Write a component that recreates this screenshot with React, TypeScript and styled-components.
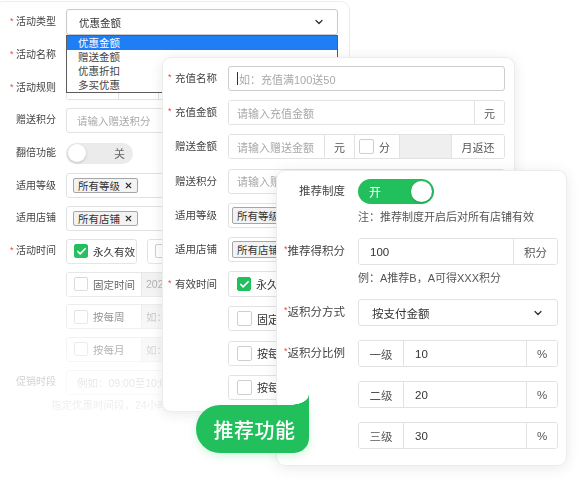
import React from "react";
import styled, { createGlobalStyle, css } from "styled-components";
import { ChevronDown, Check as CheckIcon, X } from "lucide-react";

const GREEN = "#22c05d";
const FONT = `"Liberation Sans", "Noto Sans CJK SC", sans-serif`;

const GlobalStyle = createGlobalStyle`
  html, body { margin: 0; padding: 0; background: #fff; }
  body { font-family: ${FONT}; }
  * { box-sizing: border-box; }
`;

const Canvas = styled.div`
  position: relative;
  width: 582px;
  height: 479px;
  overflow: hidden;
  background: #fff;
  font-family: ${FONT};
  color: #333;
`;

const Panel = styled.section<{
  $left: number;
  $top: number;
  $width: number;
  $height: number;
  $fs: number;
  $fade?: boolean;
}>`
  position: absolute;
  left: ${(p) => p.$left}px;
  top: ${(p) => p.$top}px;
  width: ${(p) => p.$width}px;
  height: ${(p) => p.$height}px;
  font-size: ${(p) => p.$fs}px;
  background: #fff;
  border: 1px solid #ececec;
  border-radius: 9px;
  box-shadow: 0 2px 14px rgba(0, 0, 0, 0.09);
  ${(p) =>
    p.$fade &&
    css`
      -webkit-mask-image: linear-gradient(
        to bottom,
        #000 0px,
        #000 250px,
        rgba(0, 0, 0, 0.5) 320px,
        rgba(0, 0, 0, 0.2) 390px,
        rgba(0, 0, 0, 0.05) 425px,
        transparent 450px
      );
      mask-image: linear-gradient(
        to bottom,
        #000 0px,
        #000 250px,
        rgba(0, 0, 0, 0.5) 320px,
        rgba(0, 0, 0, 0.2) 390px,
        rgba(0, 0, 0, 0.05) 425px,
        transparent 450px
      );
    `}
`;

const Form = styled.div<{ $gap: number; $pad: string }>`
  display: flex;
  flex-direction: column;
  gap: ${(p) => p.$gap}px;
  padding: ${(p) => p.$pad};
`;

const Row = styled.div<{ $cols: string; $h?: number; $colGap?: number; $rowGap?: number }>`
  display: grid;
  grid-template-columns: ${(p) => p.$cols};
  column-gap: ${(p) => p.$colGap ?? 0}px;
  row-gap: ${(p) => p.$rowGap ?? 0}px;
  align-items: center;
  min-height: ${(p) => p.$h ?? 25}px;
`;

const Label = styled.div<{ $right?: boolean; $fs: number }>`
  display: flex;
  align-items: flex-start;
  justify-content: ${(p) => (p.$right ? "flex-end" : "flex-start")};
  font-size: ${(p) => p.$fs}px;
  line-height: 1.25;
  color: #444;
  white-space: nowrap;
`;

const Star = styled.span<{ $w?: number }>`
  flex: none;
  width: ${(p) => (p.$w ? `${p.$w}px` : "auto")};
  color: #ef4338;
  font-size: 9px;
  line-height: 1;
  margin-top: 1px;
`;

const Box = styled.div<{
  $h?: number;
  $pad?: number;
  $border?: string;
  $between?: boolean;
  $w?: number;
}>`
  height: ${(p) => p.$h ?? 25}px;
  ${(p) => p.$w && `width: ${p.$w}px; flex: none;`}
  display: flex;
  align-items: center;
  justify-content: ${(p) => (p.$between ? "space-between" : "flex-start")};
  gap: 5px;
  padding: 0 ${(p) => p.$pad ?? 9}px;
  border: 1px solid ${(p) => p.$border ?? "#e2e2e2"};
  border-radius: 3px;
  background: #fff;
  min-width: 0;
  overflow: hidden;
  white-space: nowrap;
`;

const Group = styled.div<{ $h?: number }>`
  height: ${(p) => p.$h ?? 25}px;
  display: flex;
  align-items: stretch;
  border: 1px solid #e2e2e2;
  border-radius: 3px;
  background: #fff;
  overflow: hidden;
  min-width: 0;
  white-space: nowrap;
`;

const Cell = styled.div<{ $w?: number; $gray?: boolean; $center?: boolean; $pad?: number }>`
  flex: ${(p) => (p.$w ? `0 0 ${p.$w}px` : "1 1 0")};
  display: flex;
  align-items: center;
  justify-content: ${(p) => (p.$center ? "center" : "flex-start")};
  gap: 5px;
  padding: 0 ${(p) => (p.$center ? 0 : p.$pad ?? 9)}px;
  background: ${(p) => (p.$gray ? "#efefef" : "#fff")};
  color: #555;
  min-width: 0;
  overflow: hidden;
  & + & {
    border-left: 1px solid #e2e2e2;
  }
`;

const Placeholder = styled.span`
  color: #a9a9a9;
`;

const Value = styled.span<{ $muted?: boolean }>`
  color: ${(p) => (p.$muted ? "#999" : "#333")};
`;

const Caret = styled.span`
  display: inline-block;
  width: 1px;
  height: 13px;
  background: #333;
  margin-right: -4px;
`;

const SelectWrap = styled.div`
  position: relative;
`;

const Dropdown = styled.ul`
  position: absolute;
  left: 0;
  right: 0;
  top: 100%;
  margin: 0;
  padding: 0;
  list-style: none;
  border: 1px solid #5c5c5c;
  background: #fff;
  z-index: 2;
`;

const DropItem = styled.li<{ $active?: boolean }>`
  height: 14px;
  line-height: 14px;
  padding-left: 11px;
  font-size: 10.5px;
  color: ${(p) => (p.$active ? "#fff" : "#444")};
  background: ${(p) => (p.$active ? "#1f7ef6" : "transparent")};
`;

const Toggle = styled.div<{ $on?: boolean; $w: number; $h: number }>`
  justify-self: start;
  width: ${(p) => p.$w}px;
  height: ${(p) => p.$h}px;
  border-radius: ${(p) => p.$h / 2}px;
  background: ${(p) => (p.$on ? GREEN : "#ebebeb")};
  display: flex;
  flex-direction: ${(p) => (p.$on ? "row" : "row-reverse")};
  align-items: center;
  justify-content: space-between;
  padding: 0 2px;
`;

const ToggleText = styled.span<{ $on?: boolean }>`
  color: ${(p) => (p.$on ? "#fff" : "#666")};
  font-size: ${(p) => (p.$on ? 12 : 11)}px;
  padding-left: ${(p) => (p.$on ? 9 : 0)}px;
  padding-right: ${(p) => (p.$on ? 0 : 6)}px;
`;

const Knob = styled.span<{ $size: number }>`
  width: ${(p) => p.$size}px;
  height: ${(p) => p.$size}px;
  border-radius: 50%;
  background: #fff;
  box-shadow: 0 1px 3px rgba(0, 0, 0, 0.18);
  flex: none;
`;

const Tag = styled.span<{ $h: number }>`
  display: inline-flex;
  align-items: center;
  gap: 4px;
  height: ${(p) => p.$h}px;
  padding: 0 4px;
  border: 1px solid #a6a6a6;
  border-radius: 2px;
  background: #f3f3f3;
  color: #333;
  font-size: 10.5px;
`;

const Check = styled.span<{ $on?: boolean; $s: number }>`
  flex: none;
  width: ${(p) => p.$s}px;
  height: ${(p) => p.$s}px;
  border-radius: 2px;
  border: 1px solid ${(p) => (p.$on ? GREEN : "#cfcfcf")};
  background: ${(p) => (p.$on ? GREEN : "#fff")};
  display: inline-flex;
  align-items: center;
  justify-content: center;
`;

const Options = styled.div`
  display: flex;
  gap: 10px;
  min-width: 0;
`;

const Hint = styled.div`
  grid-column: 2;
  font-size: 11px;
  line-height: 14px;
  color: #555;
  white-space: nowrap;
`;

const FaintNote = styled.div`
  padding-left: 56px;
  margin-top: 2px;
  font-size: 10.5px;
  color: #888;
  white-space: nowrap;
`;

const Badge = styled.div`
  position: absolute;
  left: 196px;
  top: 405px;
  width: 113px;
  height: 48px;
  background: ${GREEN};
  border-radius: 24px 0 15px 24px;
  color: #fff;
  font-size: 20px;
  font-weight: 500;
  letter-spacing: 0.5px;
  display: flex;
  align-items: center;
  justify-content: center;
  padding-left: 4px;
  box-shadow: 0 3px 8px rgba(34, 192, 93, 0.18);
  &::after {
    content: "";
    position: absolute;
    right: 0;
    top: -10px;
    width: 19px;
    height: 10px;
    background: radial-gradient(ellipse 19px 10px at 0 0, transparent 96%, ${GREEN} 100%);
  }
`;

const Chevron = () => <ChevronDown size={12} strokeWidth={2.6} color="#333" />;

const Tick = ({ s }: { s: number }) => (
  <Check $on $s={s}>
    <CheckIcon size={s - 3} strokeWidth={3.6} color="#fff" />
  </Check>
);

const TagX = ({ children, h }: { children: React.ReactNode; h: number }) => (
  <Tag $h={h}>
    {children}
    <X size={9} strokeWidth={3} color="#333" />
  </Tag>
);

const A_COLS = "56px 1fr";
const B_COLS = "60px 1fr";
const C_COLS = "59px 1fr";

export default function App() {
  return (
    <>
      <GlobalStyle />
      <Canvas>
        {/* back panel: 活动 */}
        <Panel $left={-6} $top={1} $width={356} $height={470} $fs={10.5} $fade>
          <Form $gap={7.7} $pad="7px 11px 0 15px">
            <Row $cols={A_COLS} $h={26}>
              <Label $fs={10}>
                <Star $w={6}>*</Star>活动类型
              </Label>
              <SelectWrap>
                <Box $h={26} $pad={12} $border="#c9c9c9" $between>
                  <Value>优惠金额</Value>
                  <Chevron />
                </Box>
                <Dropdown>
                  <DropItem $active>优惠金额</DropItem>
                  <DropItem>赠送金额</DropItem>
                  <DropItem>优惠折扣</DropItem>
                  <DropItem>多买优惠</DropItem>
                </Dropdown>
              </SelectWrap>
            </Row>
            <Row $cols={A_COLS}>
              <Label $fs={10}>
                <Star $w={6}>*</Star>活动名称
              </Label>
              <Box />
            </Row>
            <Row $cols={A_COLS}>
              <Label $fs={10}>
                <Star $w={6}>*</Star>活动规则
              </Label>
              <Group>
                <Cell $w={51} />
                <Cell $w={40} />
                <Cell />
              </Group>
            </Row>
            <Row $cols={A_COLS}>
              <Label $fs={10}>
                <Star $w={6} />赠送积分
              </Label>
              <Box $pad={10}>
                <Placeholder>请输入赠送积分</Placeholder>
              </Box>
            </Row>
            <Row $cols={A_COLS}>
              <Label $fs={10}>
                <Star $w={6} />翻倍功能
              </Label>
              <Toggle $w={67} $h={21}>
                <ToggleText>关</ToggleText>
                <Knob $size={18} />
              </Toggle>
            </Row>
            <Row $cols={A_COLS}>
              <Label $fs={10}>
                <Star $w={6} />适用等级
              </Label>
              <Box $pad={6}>
                <TagX h={15}>所有等级</TagX>
              </Box>
            </Row>
            <Row $cols={A_COLS}>
              <Label $fs={10}>
                <Star $w={6} />适用店铺
              </Label>
              <Box $pad={6}>
                <TagX h={15}>所有店铺</TagX>
              </Box>
            </Row>
            <Row $cols={A_COLS}>
              <Label $fs={10}>
                <Star $w={6}>*</Star>活动时间
              </Label>
              <Options>
                <Box $w={71} $pad={7}>
                  <Tick s={14} />
                  <Value>永久有效</Value>
                </Box>
                <Box $w={90} $pad={7}>
                  <Check $s={14} />
                </Box>
              </Options>
            </Row>
            <Row $cols={A_COLS}>
              <span />
              <Group>
                <Cell $w={74} $pad={7}>
                  <Check $s={14} />
                  <Value>固定时间</Value>
                </Cell>
                <Cell $gray $pad={4}>
                  <Value $muted>2023</Value>
                </Cell>
              </Group>
            </Row>
            <Row $cols={A_COLS}>
              <span />
              <Group>
                <Cell $w={74} $pad={7}>
                  <Check $s={14} />
                  <Value>按每周</Value>
                </Cell>
                <Cell $gray $pad={4}>
                  <Value $muted>如：</Value>
                </Cell>
              </Group>
            </Row>
            <Row $cols={A_COLS}>
              <span />
              <Group>
                <Cell $w={74} $pad={7}>
                  <Check $s={14} />
                  <Value>按每月</Value>
                </Cell>
                <Cell $gray $pad={4}>
                  <Value $muted>如：</Value>
                </Cell>
              </Group>
            </Row>
            <Row $cols={A_COLS}>
              <Label $fs={10}>
                <Star $w={6} />促销时段
              </Label>
              <Box $pad={10}>
                <Value $muted>例如：09:00至10:00</Value>
              </Box>
            </Row>
          </Form>
          <FaintNote>指定优惠时间段，24小时制</FaintNote>
        </Panel>

        {/* middle panel: 充值 */}
        <Panel $left={162} $top={57} $width={353} $height={355} $fs={11}>
          <Form $gap={9.2} $pad="8px 9px 0 5px">
            <Row $cols={B_COLS}>
              <Label $fs={10.5}>
                <Star $w={7}>*</Star>充值名称
              </Label>
              <Box $pad={8} $border="#cdcdcd">
                <Caret />
                <Placeholder>如：充值满100送50</Placeholder>
              </Box>
            </Row>
            <Row $cols={B_COLS}>
              <Label $fs={10.5}>
                <Star $w={7}>*</Star>充值金额
              </Label>
              <Group>
                <Cell $pad={8}>
                  <Placeholder>请输入充值金额</Placeholder>
                </Cell>
                <Cell $w={30} $center>
                  元
                </Cell>
              </Group>
            </Row>
            <Row $cols={B_COLS}>
              <Label $fs={10.5}>
                <Star $w={7} />赠送金额
              </Label>
              <Group>
                <Cell $pad={8}>
                  <Placeholder>请输入赠送金额</Placeholder>
                </Cell>
                <Cell $w={30} $center>
                  元
                </Cell>
                <Cell $w={45} $pad={4}>
                  <Check $s={15} />
                  分
                </Cell>
                <Cell $w={52} $gray />
                <Cell $w={53} $center>
                  月返还
                </Cell>
              </Group>
            </Row>
            <Row $cols={B_COLS}>
              <Label $fs={10.5}>
                <Star $w={7} />赠送积分
              </Label>
              <Box $pad={8}>
                <Placeholder>请输入赠送积分</Placeholder>
              </Box>
            </Row>
            <Row $cols={B_COLS}>
              <Label $fs={10.5}>
                <Star $w={7} />适用等级
              </Label>
              <Box $pad={3}>
                <TagX h={17}>所有等级</TagX>
              </Box>
            </Row>
            <Row $cols={B_COLS}>
              <Label $fs={10.5}>
                <Star $w={7} />适用店铺
              </Label>
              <Box $pad={3}>
                <TagX h={17}>所有店铺</TagX>
              </Box>
            </Row>
            <Row $cols={B_COLS} $h={26}>
              <Label $fs={10.5}>
                <Star $w={7}>*</Star>有效时间
              </Label>
              <Options>
                <Box $h={26} $w={80} $pad={8}>
                  <Tick s={14} />
                  <Value>永久有效</Value>
                </Box>
              </Options>
            </Row>
            <Row $cols={B_COLS}>
              <span />
              <Group>
                <Cell $w={80} $pad={8}>
                  <Check $s={15} />
                  <Value>固定时间</Value>
                </Cell>
                <Cell $gray />
              </Group>
            </Row>
            <Row $cols={B_COLS}>
              <span />
              <Group>
                <Cell $w={80} $pad={8}>
                  <Check $s={15} />
                  <Value>按每周</Value>
                </Cell>
                <Cell $gray />
              </Group>
            </Row>
            <Row $cols={B_COLS}>
              <span />
              <Group>
                <Cell $w={80} $pad={8}>
                  <Check $s={15} />
                  <Value>按每月</Value>
                </Cell>
                <Cell $gray />
              </Group>
            </Row>
          </Form>
        </Panel>

        {/* front panel: 推荐 */}
        <Panel $left={276} $top={170} $width={291} $height={296} $fs={11.5}>
          <Form $gap={14} $pad="8px 8px 0 9px">
            <Row $cols={C_COLS} $colGap={13} $rowGap={6}>
              <Label $right $fs={11.5}>
                推荐制度
              </Label>
              <Toggle $on $w={76} $h={25}>
                <ToggleText $on>开</ToggleText>
                <Knob $size={21} />
              </Toggle>
              <Hint>注：推荐制度开启后对所有店铺有效</Hint>
            </Row>
            <Row $cols={C_COLS} $colGap={13} $rowGap={6}>
              <Label $right $fs={11.5}>
                <Star>*</Star>推荐得积分
              </Label>
              <Group $h={27}>
                <Cell $pad={11}>
                  <Value>100</Value>
                </Cell>
                <Cell $w={44} $center>
                  积分
                </Cell>
              </Group>
              <Hint>例：A推荐B，A可得XXX积分</Hint>
            </Row>
            <Row $cols={C_COLS} $colGap={13}>
              <Label $right $fs={11.5}>
                <Star>*</Star>返积分方式
              </Label>
              <Box $h={27} $pad={13} $between>
                <Value>按支付金额</Value>
                <Chevron />
              </Box>
            </Row>
            <Row $cols={C_COLS} $colGap={13}>
              <Label $right $fs={11.5}>
                <Star>*</Star>返积分比例
              </Label>
              <Group $h={27}>
                <Cell $w={44} $center>
                  一级
                </Cell>
                <Cell $pad={11}>
                  <Value>10</Value>
                </Cell>
                <Cell $w={31} $center>
                  %
                </Cell>
              </Group>
            </Row>
            <Row $cols={C_COLS} $colGap={13}>
              <span />
              <Group $h={27}>
                <Cell $w={44} $center>
                  二级
                </Cell>
                <Cell $pad={11}>
                  <Value>20</Value>
                </Cell>
                <Cell $w={31} $center>
                  %
                </Cell>
              </Group>
            </Row>
            <Row $cols={C_COLS} $colGap={13}>
              <span />
              <Group $h={27}>
                <Cell $w={44} $center>
                  三级
                </Cell>
                <Cell $pad={11}>
                  <Value>30</Value>
                </Cell>
                <Cell $w={31} $center>
                  %
                </Cell>
              </Group>
            </Row>
          </Form>
        </Panel>

        <Badge>推荐功能</Badge>
      </Canvas>
    </>
  );
}
